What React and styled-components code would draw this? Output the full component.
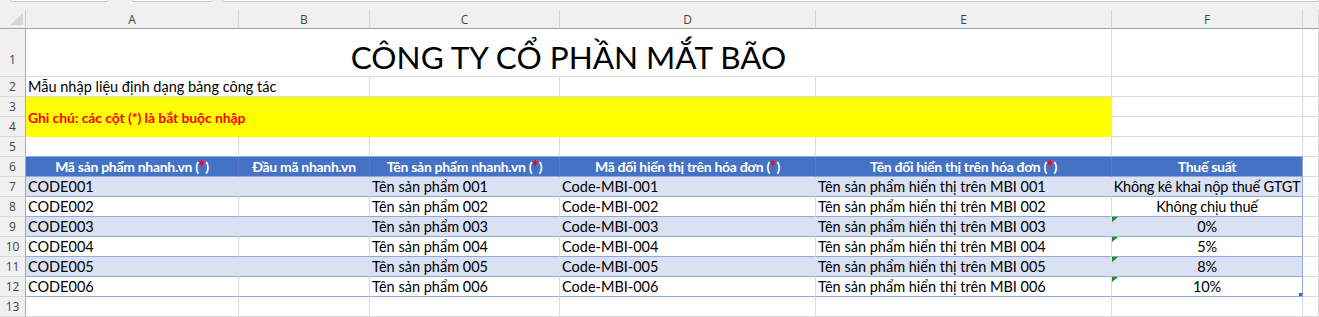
import React from 'react';
import styled, { createGlobalStyle } from 'styled-components';

const GlobalStyle = createGlobalStyle`
  html, body { margin: 0; padding: 0; background: #ffffff; overflow: hidden; }
  body { font-family: Lato, "Liberation Sans", sans-serif; }
  * { box-sizing: border-box; }
`;

const GRID = '#dadada';
const TBL_LINE = '#8ea9db';
const TBL_HEAD = '#4472c4';
const BAND = '#d9e1f2';

const Page = styled.div`
  width: 1319px;
  height: 317px;
  overflow: hidden;
  background: #ffffff;
`;

const TabStrip = styled.div`
  display: flex;
  height: 10px;
  background: #f0f0f0;
  padding-left: 10px;
`;

const TabStub = styled.div`
  height: 2px;
  width: ${(p) => (p.$width ? `${p.$width}px` : 'auto')};
  flex: ${(p) => (p.$width ? '0 0 auto' : '1 1 auto')};
  margin-left: ${(p) => p.$offset || 0}px;
  background: #ffffff;
  border: 1px solid #c8c8c8;
  border-top: none;
  border-radius: 0 0 3px 3px;
`;

const Sheet = styled.div`
  display: grid;
  grid-template-columns: 26px 213px 131px 190px 256px 296px 191px 1fr;
  grid-template-rows: 19px 48px repeat(12, 20px);
`;

const Corner = styled.div`
  background: #f0f0f0;
  border-bottom: 1px solid #a0a0a0;
  border-right: 1px solid #c8c8c8;
  position: relative;
`;

const CornerMark = styled.svg`
  position: absolute;
  left: 0;
  top: 0;
`;

const ColHeader = styled.div`
  background: #f0f0f0;
  border-bottom: 1px solid #a0a0a0;
  border-right: 1px solid #d4d4d4;
  display: flex;
  align-items: center;
  justify-content: center;
  font-family: "Open Sans", "Noto Sans", sans-serif;
  font-size: 12px;
  color: #444444;
  padding-top: 1px;
`;

const RowHeader = styled.div`
  background: #f0f0f0;
  border-right: 1px solid #ababab;
  border-bottom: 1px solid #d9d9d9;
  display: flex;
  align-items: flex-end;
  justify-content: center;
  font-family: "Open Sans", "Noto Sans", sans-serif;
  font-size: 12px;
  line-height: 12px;
  color: #444444;
  padding-bottom: ${(p) => p.$pb ?? 3}px;
`;

const Cell = styled.div`
  position: relative;
  display: flex;
  align-items: flex-end;
  justify-content: ${(p) => (p.$center ? 'center' : 'flex-start')};
  grid-column: span ${(p) => p.$span || 1};
  background: ${(p) => p.$fill || '#ffffff'};
  border-right: 1px solid ${(p) => p.$right || GRID};
  border-bottom: 1px solid ${(p) => p.$bottom || GRID};
  padding: 0 2px 2px 2px;
  font-size: 14.5px;
  line-height: 14px;
  letter-spacing: ${(p) => (p.$tight ? '-0.2px' : '0')};
  color: #000000;
  white-space: nowrap;
  overflow: visible;
`;

const TitleCell = styled.div`
  grid-column: span 5;
  display: flex;
  align-items: flex-end;
  justify-content: center;
  border-right: 1px solid ${GRID};
  border-bottom: 1px solid ${GRID};
  font-size: 31.5px;
  line-height: 32px;
  padding-bottom: 3px;
  color: #000000;
  white-space: nowrap;
`;

const NoteCell = styled.div`
  grid-column: span 5;
  grid-row: span 2;
  display: flex;
  align-items: center;
  background: #ffff00;
  border-right: 1px solid #ffff00;
  border-bottom: 1px solid #ffff00;
  padding: 1px 2px 0 2px;
  font-size: 14px;
  font-weight: 700;
  letter-spacing: -0.1px;
  color: #ff0000;
  white-space: nowrap;
`;

const HeaderCell = styled.div`
  display: flex;
  align-items: flex-end;
  justify-content: center;
  background: ${TBL_HEAD};
  border-right: 1px solid ${(p) => (p.$last ? TBL_LINE : '#5579c6')};
  border-bottom: 1px solid ${TBL_LINE};
  padding: 0 3px 2px 3px;
  font-size: 14px;
  line-height: 14px;
  font-weight: 700;
  letter-spacing: -0.3px;
  color: #ffffff;
  white-space: nowrap;
`;

const Star = styled.span`
  color: #ff0000;
  font-size: 16px;
  font-weight: 900;
  line-height: 14px;
`;

const ErrorMark = styled.span`
  position: absolute;
  left: 0;
  top: 0;
  width: 0;
  height: 0;
  border-top: 5px solid #1f8a1f;
  border-right: 6px solid transparent;
`;

const ResizeHandle = styled.span`
  position: absolute;
  right: 0;
  bottom: 0;
  width: 3px;
  height: 3px;
  background: #3f63b5;
`;

const columns = ['A', 'B', 'C', 'D', 'E', 'F', ''];

const headers = [
  { text: 'Mã sản phẩm nhanh.vn', star: true },
  { text: 'Đầu mã nhanh.vn', star: false },
  { text: 'Tên sản phẩm nhanh.vn', star: true },
  { text: 'Mã đối hiển thị trên hóa đơn', star: true },
  { text: 'Tên đối hiển thị trên hóa đơn', star: true },
  { text: 'Thuế suất', star: false },
];

const rows = [
  { n: '001', tax: 'Không kê khai nộp thuế GTGT', mark: false },
  { n: '002', tax: 'Không chịu thuế', mark: false },
  { n: '003', tax: '0%', mark: true },
  { n: '004', tax: '5%', mark: true },
  { n: '005', tax: '8%', mark: true },
  { n: '006', tax: '10%', mark: true },
];

function DataRow({ row, index }) {
  const band = index % 2 === 0;
  const fill = band ? BAND : '#ffffff';
  const inner = band ? BAND : GRID;
  const last = index === rows.length - 1;
  return (
    <>
      <RowHeader>{7 + index}</RowHeader>
      <Cell $fill={fill} $right={inner} $bottom={TBL_LINE}>{`CODE${row.n}`}</Cell>
      <Cell $fill={fill} $right={inner} $bottom={TBL_LINE} />
      <Cell $fill={fill} $right={inner} $bottom={TBL_LINE}>{`Tên sản phẩm ${row.n}`}</Cell>
      <Cell $fill={fill} $right={inner} $bottom={TBL_LINE}>{`Code-MBI-${row.n}`}</Cell>
      <Cell $fill={fill} $right={inner} $bottom={TBL_LINE}>{`Tên sản phẩm hiển thị trên MBI ${row.n}`}</Cell>
      <Cell $fill={fill} $right={TBL_LINE} $bottom={TBL_LINE} $center $tight>
        {row.mark && <ErrorMark />}
        {row.tax}
        {last && <ResizeHandle />}
      </Cell>
      <Cell />
    </>
  );
}

export default function App() {
  return (
    <Page>
      <GlobalStyle />
      <TabStrip>
        <TabStub $width={98} />
        <TabStub $width={81} $offset={24} />
        <TabStub $offset={9} />
      </TabStrip>
      <Sheet>
        <Corner>
          <CornerMark width="26" height="19" viewBox="0 0 26 19">
            <polygon points="10,15 23,15 23,3" fill="#d6d6d6" />
          </CornerMark>
        </Corner>
        {columns.map((c, i) => (
          <ColHeader key={i}>{c}</ColHeader>
        ))}

        <RowHeader $pb={10}>1</RowHeader>
        <TitleCell>CÔNG TY CỔ PHẦN MẮT BÃO</TitleCell>
        <Cell />
        <Cell />

        <RowHeader>2</RowHeader>
        <Cell $span={2}>Mẫu nhập liệu định dạng bảng công tác</Cell>
        <Cell />
        <Cell />
        <Cell />
        <Cell />
        <Cell />

        <RowHeader>3</RowHeader>
        <NoteCell>Ghi chú: các cột (*) là bắt buộc nhập</NoteCell>
        <Cell />
        <Cell />
        <RowHeader>4</RowHeader>
        <Cell />
        <Cell />

        <RowHeader>5</RowHeader>
        {[0, 1, 2, 3, 4, 5].map((i) => (
          <Cell key={i} $bottom={TBL_LINE} />
        ))}
        <Cell />

        <RowHeader>6</RowHeader>
        {headers.map((h, i) => (
          <HeaderCell key={i} $last={i === headers.length - 1}>
            {h.text}
            {h.star && (
              <>
                {'\u00a0('}
                <Star>*</Star>
                {')'}
              </>
            )}
          </HeaderCell>
        ))}
        <Cell />

        {rows.map((r, i) => (
          <DataRow key={r.n} row={r} index={i} />
        ))}

        <RowHeader>13</RowHeader>
        {[0, 1, 2, 3, 4, 5, 6].map((i) => (
          <Cell key={i} />
        ))}
      </Sheet>
    </Page>
  );
}
